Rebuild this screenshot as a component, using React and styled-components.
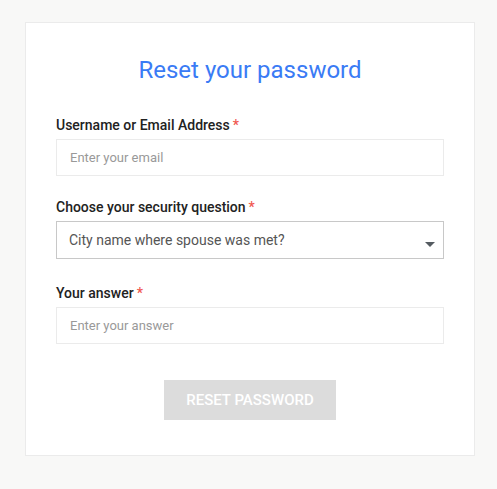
import React from "react";
import styled, { createGlobalStyle } from "styled-components";

const Global = createGlobalStyle`
  html, body { margin: 0; padding: 0; background: #f8f8f7; }
  body { font-family: Roboto, "Noto Sans", sans-serif; }
  * { box-sizing: border-box; }
`;

const Page = styled.div`
  padding: 22px 22px 33px 25px;
`;

const Card = styled.form`
  width: 450px;
  background: #fff;
  border: 1px solid #ebebeb;
  padding: 29px 30px 35px 30px;
  display: flex;
  flex-direction: column;
`;

const Title = styled.h1`
  margin: 0 0 29px 0;
  text-align: center;
  font-weight: 400;
  font-size: 24px;
  line-height: 36px;
  color: #3a7bf5;
`;

const Field = styled.div`
  display: flex;
  flex-direction: column;
  margin-bottom: ${p => p.$mb || 24}px;
`;

const Label = styled.label`
  font-size: 14px;
  font-weight: 500;
  color: #222;
  line-height: 16px;
  margin-bottom: 6px;
`;

const Star = styled.span`
  color: #f0574f;
  margin-left: 3px;
`;

const Input = styled.input`
  height: 37px;
  border: 1px solid #ebebeb;
  padding: 0 13px;
  font-family: inherit;
  font-size: 13px;
  color: #333;
  outline: none;
  &::placeholder { color: #999; }
`;

const SelectBox = styled.div`
  position: relative;
  height: 38px;
  border: 1px solid #c8c8c8;
  display: flex;
  align-items: center;
  padding: 0 12px;
  font-size: 14px;
  color: #555;
`;

const Arrow = styled.span`
  position: absolute;
  right: 8px;
  top: 20px;
  width: 0;
  height: 0;
  border-left: 5px solid transparent;
  border-right: 5px solid transparent;
  border-top: 5px solid #555b61;
`;

const Button = styled.button`
  align-self: center;
  margin-top: 12px;
  width: 172px;
  height: 40px;
  border: none;
  background: #dcdcdc;
  color: #fff;
  font-family: inherit;
  font-size: 15px;
  font-weight: 500;
  text-transform: uppercase;
  letter-spacing: 0;
`;

export default function App() {
  return (
    <>
      <Global />
      <Page>
        <Card onSubmit={e => e.preventDefault()}>
          <Title>Reset your password</Title>
          <Field $mb={23}>
            <Label>Username or Email Address<Star>*</Star></Label>
            <Input placeholder="Enter your email" />
          </Field>
          <Field $mb={26}>
            <Label>Choose your security question<Star>*</Star></Label>
            <SelectBox>
              City name where spouse was met?
              <Arrow />
            </SelectBox>
          </Field>
          <Field $mb={24}>
            <Label>Your answer<Star>*</Star></Label>
            <Input placeholder="Enter your answer" />
          </Field>
          <Button type="button">Reset password</Button>
        </Card>
      </Page>
    </>
  );
}
